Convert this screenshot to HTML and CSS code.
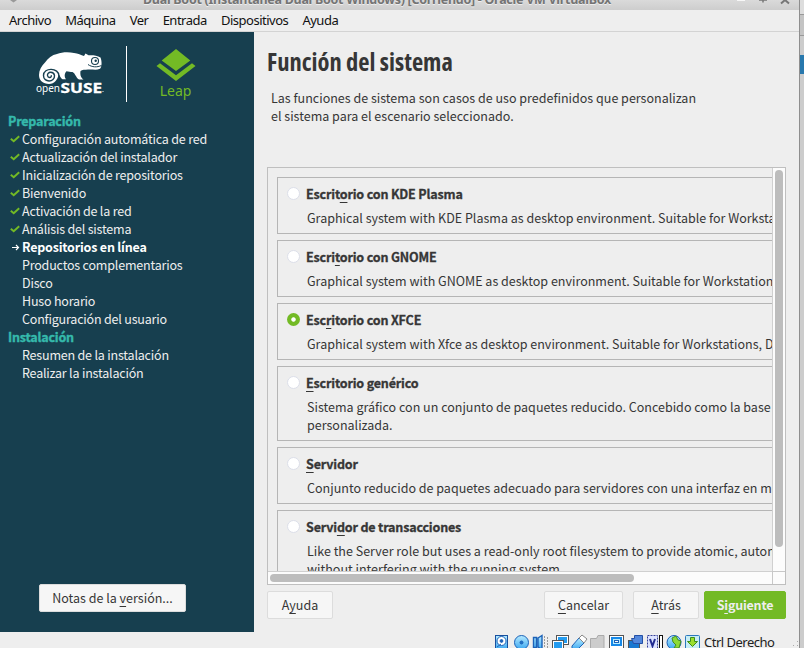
FILE: index.html
```html
<!DOCTYPE html>
<html lang="es">
<head>
<meta charset="utf-8">
<title>Función del sistema</title>
<link rel="stylesheet" href="styles.css">
</head>
<body>
<svg class="defs" width="0" height="0">
  <symbol id="check" viewBox="0 0 10 8"><path d="M.8 3.800 3.700 6.200 9.200 1.300" fill="none" stroke="#73ba25" stroke-width="2"/></symbol>
</svg>
<div class="screen">
  <div class="window">
    <header class="titlebar">
      <svg class="tb-menu" width="10" height="4" viewBox="0 0 10 4"><path d="M2 0h7L5.500 2.500z" fill="#999"/></svg>
      <span class="tb-title">Dual Boot (Instantánea Dual Boot Windows) [Corriendo] - Oracle VM VirtualBox</span>
      <svg class="tb-buttons" width="60" height="5" viewBox="0 0 60 5"><path d="M3 .5h8" stroke="#f7f7f7"/><path d="M25 0h8M29 0v2.500" stroke="#777" stroke-width="1.500"/><path d="M47 3.500 51 0l4 3.500" fill="none" stroke="#777" stroke-width="2"/></svg>
    </header>
    <nav class="menubar">
      <span>Archivo</span><span>Máquina</span><span>Ver</span><span>Entrada</span><span>Dispositivos</span><span>Ayuda</span>
    </nav>
    <div class="guest">
      <aside class="sidebar">
        <div class="brand">
          <svg class="suse" width="72" height="48" viewBox="0 0 72 48">
            <path d="M4 25C4 20 6.500 16 10 12.500 13 8 17 5 22 4c5-2 12-2 17-1 4 .5 7 2 10 3l1.500-2.500 3 1.800C58 5 62 5.500 65.500 7.500 67 11 67 17 65 18.800 61 20.500 57 19 53 19.500c-3 .3-6 0-7.500 1.500-.5 3 0 6.500 3 8.500h-4.500c-3-1.500-3.500-6-6.500-7.500-2 0-4-.8-6-.8-2 2-2.500 5.300-.5 8h-3.500c-2-1-2.500-3.500-4-5.200-.5 5.500-4 10-9.500 10C8 34 4 30.500 4 25z" fill="#fff"/>
            <path d="M24 26C24 17.500 8.500 17 8.500 25.500c0 7.500 11.500 7 11 0-.8-4.500-7.500-4-7 0 .5 3 4.500 2.500 3.700-.2" fill="none" stroke="#173f4f" stroke-width="1.400"/>
            <circle cx="60" cy="11" r="3.500" fill="#fff" stroke="#173f4f" stroke-width="1.100"/><circle cx="60.700" cy="10.700" r="1.200" fill="#173f4f"/>
            <path d="M53 14.500c4 2.800 9 3 13.500 1" fill="none" stroke="#173f4f"/>
            <text class="open" x="1" y="42" textLength="24" lengthAdjust="spacingAndGlyphs">open</text>
            <text class="suse-word" x="25.500" y="42.500" textLength="41.500" lengthAdjust="spacingAndGlyphs">SUSE</text>
            <circle cx="68" cy="41.500" r=".6" fill="#fff"/>
          </svg>
          <span class="brand-rule"></span>
          <div class="leap">
            <svg width="40" height="34" viewBox="0 0 40 34"><path d="M20 0 34.300 11.500 20 22 5.700 11.500zM.500 17 4 14.200 20 26.200 36 14.200 39.500 17 20 32z" fill="#73ba25"/></svg>
            <span>Leap</span>
          </div>
        </div>
        <h2>Preparación</h2>
        <ul>
          <li><svg><use href="#check"/></svg>Configuración automática de red</li>
          <li><svg><use href="#check"/></svg>Actualización del instalador</li>
          <li><svg><use href="#check"/></svg>Inicialización de repositorios</li>
          <li><svg><use href="#check"/></svg>Bienvenido</li>
          <li><svg><use href="#check"/></svg>Activación de la red</li>
          <li><svg><use href="#check"/></svg>Análisis del sistema</li>
          <li class="current"><svg viewBox="0 0 10 8"><path d="M2 4.500H8.500M6 2 8.500 4.500 6 7" fill="none" stroke="#fff" stroke-width="1.200"/></svg>Repositorios en línea</li>
          <li class="todo">Productos complementarios</li>
          <li class="todo">Disco</li>
          <li class="todo">Huso horario</li>
          <li class="todo">Configuración del usuario</li>
        </ul>
        <h2>Instalación</h2>
        <ul>
          <li class="todo">Resumen de la instalación</li>
          <li class="todo">Realizar la instalación</li>
        </ul>
        <button class="btn notes">Notas de la <u>v</u>ersión...</button>
      </aside>
      <main>
        <h1>Función del sistema</h1>
        <p class="intro">Las funciones de sistema son casos de uso predefinidos que personalizan<br>el sistema para el escenario seleccionado.</p>
        <div class="scroller">
          <div class="viewport">
            <section class="role"><i class="radio"></i><h3>Escrit<u>o</u>rio con KDE Plasma</h3><p>Graphical system with KDE Plasma as desktop environment. Suitable for Workstations,</p></section>
            <section class="role"><i class="radio"></i><h3>Escri<u>t</u>orio con GNOME</h3><p>Graphical system with GNOME as desktop environment. Suitable for Workstations,</p></section>
            <section class="role"><i class="radio on"></i><h3>Esc<u>r</u>itorio con XFCE</h3><p>Graphical system with Xfce as desktop environment. Suitable for Workstations, Desktops</p></section>
            <section class="role"><i class="radio"></i><h3><u>E</u>scritorio genérico</h3><p>Sistema gráfico con un conjunto de paquetes reducido. Concebido como la base<br>personalizada.</p></section>
            <section class="role"><i class="radio"></i><h3><u>S</u>ervidor</h3><p>Conjunto reducido de paquetes adecuado para servidores con una interfaz en modo</p></section>
            <section class="role"><i class="radio"></i><h3>Servi<u>d</u>or de transacciones</h3><p>Like the Server role but uses a read-only root filesystem to provide atomic, automatic<br>without interfering with the running system.</p></section>
          </div>
          <div class="vbar"><i></i></div>
          <div class="hbar"><i></i></div>
          <div class="corner"></div>
        </div>
        <footer class="actions">
          <button class="btn help">A<u>y</u>uda</button>
          <button class="btn cancel"><u>C</u>ancelar</button>
          <button class="btn back"><u>A</u>trás</button>
          <button class="btn next">S<u>i</u>guiente</button>
        </footer>
      </main>
    </div>
    <footer class="status">
      <svg width="210" height="16" viewBox="0 0 210 16">
        <defs><linearGradient id="b" x2="0" y2="1"><stop stop-color="#b7ebff"/><stop offset="1" stop-color="#39a6f0"/></linearGradient></defs>
        <g stroke="#1c62b8" stroke-width="1">
          <rect x=".5" y="3.500" width="12" height="14" fill="url(#b)" stroke="#174f9e"/><circle cx="6.500" cy="9" r="4.500" fill="#fff"/><circle cx="6.500" cy="9" r="1.400" fill="#1c62b8"/><path d="M2 15 6 12"/>
          <circle cx="26.500" cy="10.500" r="7" fill="url(#b)"/><circle cx="26.500" cy="10.500" r="1.500" fill="#1c74c8"/>
          <path d="M38.500 5.500h3v10h-3zM43 6l4-2.500v14L43 15z" fill="url(#b)" stroke-width="1.400"/><path d="M49.500 4v13M52.500 5v12" stroke="#999" stroke-dasharray="2 1"/>
          <g stroke="#555"><rect x="61.500" y="3.500" width="12" height="9" fill="#fff"/><rect x="63" y="5" width="9" height="6" fill="#249cf0" stroke="none"/><rect x="57.500" y="8.500" width="11" height="9" fill="#fff"/><rect x="59" y="10" width="8" height="6" fill="#249cf0" stroke="none"/></g>
          <path d="m77 14 7-8 5 5-7 7h-5z" fill="url(#b)"/><path d="m84 6 3-3 5 4-3 4z" fill="#fff" stroke="#888"/>
          <path d="M95.500 6.500h6l1.500-3h6v13H95.500z" fill="#ccc" stroke="#aaa"/>
          <rect x="114.500" y="3.500" width="14" height="13" fill="#fff" stroke="#555"/><rect x="117" y="6" width="9" height="7" fill="#b7ebff" stroke="#1689e8" stroke-width="2"/><rect x="119.500" y="8.500" width="4" height="2" fill="#fff"/>
          <rect x="133.500" y="8.500" width="11" height="8" fill="#1978d1" stroke="#555"/><path d="M136.500 6.500h3v-3h8v8h-9z" fill="#5388dc" stroke="#244fa5"/>
          <rect x="152.500" y="3.500" width="10" height="14" fill="#dce3ff" stroke="#343f9a" stroke-dasharray="2 1"/><path d="m155 7 2.500 7 2.500-7" fill="none" stroke="#222c91" stroke-width="2"/><path d="M166 3v14" stroke="#111" stroke-width="4"/><path d="M166 4v12" stroke="#fff" stroke-width="2"/>
          <circle cx="179" cy="10.500" r="7" fill="url(#b)"/><path d="m177 6 4-2 2 4 3 1-2 7h-5l2-3-3-3z" fill="#8cdb36" stroke="#428b24"/>
          <rect x="190.500" y="3.500" width="14" height="14" rx="1" fill="#c7edf4" stroke="#2b77bd"/><path d="M195.500 5.500h4v4h3l-5 5-5-5h3z" fill="#9bdf2e" stroke="#3e8d1c"/>
        </g>
      </svg>
      <span class="hostkey">Ctrl Derecho</span>
      <svg class="grip" width="6" height="6" viewBox="0 0 6 6"><path d="M4 0h1v1H4zM4 4h1v1H4zM0 4h1v1H0z" fill="#aaa"/></svg>
    </footer>
  </div>
  <div class="behind"><i></i></div>
</div>
</body>
</html>
```

FILE: styles.css
```css
* { box-sizing: border-box; }
body, h1, h2, h3, p, ul { margin: 0; padding: 0; }
body { overflow: hidden; background: #eee; font: 12.53px/18px "Noto Sans CJK SC", "Noto Sans", sans-serif; color: #363636; }
.defs { position: absolute; }
.screen { display: flex; width: 804px; height: 648px; overflow: hidden; }
.window { width: 800px; flex: none; display: flex; flex-direction: column; border-right: 1px solid #8e8e8e; background: #eee; }
.titlebar { height: 10px; flex: none; overflow: hidden; display: flex; align-items: flex-start; background: linear-gradient(#dadada, #cdcdcd); }
.tb-menu { margin-left: 8px; width: 10px; }
.tb-title { margin: -9px 0 0 125px; width: 470px; white-space: nowrap; font: bold 12.5px/18px "Noto Sans", sans-serif; letter-spacing: -.28px; color: #747474; text-shadow: 0 1px #eee; }
.tb-buttons { margin-left: 121px; }
.menubar { height: 22px; flex: none; display: flex; padding-left: 9px; border-bottom: 1px solid #d3d3d3; font: 13px/20px "Noto Sans", sans-serif; letter-spacing: -.5px; color: #111; gap: 14.2px; white-space: nowrap; }
.guest { display: flex; height: 600px; flex: none; }
.sidebar { width: 254px; flex: none; padding: 0 8px; background: #173f4f; color: #eee; display: flex; flex-direction: column; letter-spacing: -.2px; }
.brand { height: 80px; display: flex; padding-left: 27px; flex: none; letter-spacing: 0; }
.suse { margin-top: 18px; overflow: visible; }
.open { font: 11.5px "Noto Sans", sans-serif; fill: #fff; }
.suse-word { font: bold 13.5px "Noto Sans", sans-serif; fill: #fff; stroke: #fff; stroke-width: .3px; }
.brand-rule { width: 1px; height: 56px; margin: 14px 29px 0 19px; background: #fff; }
.leap { padding-top: 17px; width: 40px; display: flex; flex-direction: column; align-items: center; color: #73ba25; font: 14px/17px "Noto Sans", sans-serif; }
.leap svg { flex: none; }
.leap span { margin: -1px 1px 0 0; letter-spacing: -.1px; }
.sidebar h2 { font-size: 12.53px; line-height: 18px; color: #35b9ab; letter-spacing: -.19px; -webkit-text-stroke: .4px; }
.sidebar ul { list-style: none; }
.sidebar li { height: 18px; display: flex; align-items: center; white-space: nowrap; }
.sidebar li svg { width: 10px; height: 8px; margin: 0 2px; flex: none; }
.sidebar .todo { padding-left: 14px; }
.sidebar .current { font-weight: bold; color: #fff; }
.btn { display: block; height: 28px; padding: 0; border: 1px solid #dcdcdc; border-radius: 2px; background: #f6f6f6; color: #363636; font: inherit; letter-spacing: 0; white-space: nowrap; }
u { text-decoration: underline; text-underline-offset: 3px; text-decoration-thickness: 1px; text-decoration-skip-ink: none; }
.notes { width: 147px; margin: auto 0 20px 31px; }
main { width: 545px; padding: 14px 13px 0; }
h1 { height: 32px; font: bold 24.5px/32px "Open Sans", sans-serif; font-stretch: 75%; white-space: nowrap; }
.intro { margin: 11px 0 0 4px; height: 78px; line-height: 18px; white-space: nowrap; }
.scroller { width: 519px; height: 418px; display: grid; grid-template: 403px 13px / 504px 13px; border: 1px solid #bfbfbf; background: #fcfcfc; }
.viewport { overflow: hidden; padding: 9px 0 0 9px; display: flex; flex-direction: column; gap: 6px; background: #eee; }
.role { width: 620px; min-height: 57px; flex: none; display: grid; grid-template-columns: 28px 1fr; align-content: start; padding: 7px 0 6px; border: 1px solid #b5b5b5; white-space: nowrap; }
.role h3 { font-size: 12.53px; line-height: 18px; letter-spacing: -.17px; -webkit-text-stroke: .3px; }
.role p { grid-column: 2; margin: 6px 0 0 1px; line-height: 18px; }
.radio { width: 13px; height: 13px; margin: 2px 0 0 9px; border: 1px solid #dcdfe9; border-radius: 50%; background: #fff; }
.radio.on { border: 0; background: radial-gradient(circle, #fff 1.8px, #73ba25 2.6px); }
.vbar { border-left: 1px solid #d0d0d0; padding: 2px 2px 0; }
.vbar i { display: block; width: 8px; height: 377px; border-radius: 4px; background: #bdbdbd; }
.hbar { border-top: 1px solid #d0d0d0; padding: 2px 2px 0; }
.hbar i { display: block; width: 364px; height: 8px; border-radius: 4px; background: #bdbdbd; }
.corner { border: solid #c8c8c8; border-width: 1px 0 0 1px; }
.actions { display: flex; padding-top: 6px; }
.help { width: 66px; }
.cancel { width: 79px; margin-left: 211px; }
.back { width: 66px; margin: 0 5px 0 10px; }
.next { width: 82px; background: #73ba25; border-color: #73ba25; color: #eee; font-weight: bold; letter-spacing: -.2px; }
.status { height: 16px; flex: none; display: flex; overflow: hidden; padding-left: 495px; }
.status > svg { flex: none; }
.hostkey { margin-left: -1px; font: 13px/21px "Noto Sans", sans-serif; letter-spacing: -.5px; color: #222; white-space: nowrap; }
.status .grip { margin: 9px 0 0 auto; }
.behind { flex: 1; display: flow-root; background: linear-gradient(#ddd 14px, #999 14px 15px, #c4c4c4 15px 35px, #999 35px 36px, #ccc 36px); }
.behind i { display: block; margin-top: 55px; height: 19px; background: #2878ad; }
```
